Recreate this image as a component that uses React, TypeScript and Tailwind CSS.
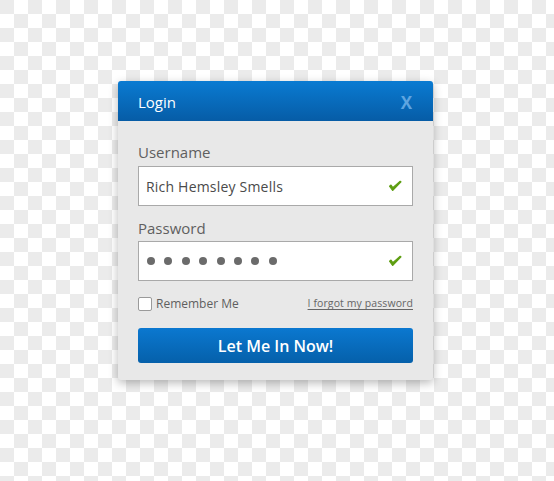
import React from "react";

function Check() {
  return (
    <svg width="14" height="12" viewBox="0 0 14 12">
      <path d="M1.5 6.2 L4.6 10.5 L13 1.8 L12.2 1.2 L4.8 7.6 L3 5 Z" fill="#5e9e12" stroke="#5e9e12" strokeWidth="1.1" strokeLinejoin="round" />
    </svg>
  );
}

export default function App() {
  return (
    <div
      className="w-[554px] h-[481px] overflow-hidden pt-[81px] pl-[118px] bg-white bg-[conic-gradient(#ebebeb_25%,#ffffff_0_50%,#ebebeb_0_75%,#ffffff_0)] bg-size-[28px_28px] bg-position-[14px_0px]"
      style={{ fontFamily: '"Open Sans", "Noto Sans", sans-serif' }}
    >
      <div className="w-[315px] h-[299px] rounded-[3px] bg-[#e8e8e8] shadow-[0_3px_10px_rgba(0,0,0,0.28)] overflow-hidden flex flex-col">
        <div className="h-[40px] flex items-center justify-between px-[20px] pt-[3px] bg-[linear-gradient(#0a7bd2,#065ca6)]">
          <span className="text-white text-[15px]">Login</span>
          <span className="text-[#5fa5e0] text-[17px] font-bold pr-[1px]">X</span>
        </div>
        <div className="flex flex-col px-[20px] pt-[21px]">
          <div className="text-[#5f5f5f] text-[15px] leading-[20px]">Username</div>
          <div className="mt-[4px] h-[40px] bg-white border border-[#a9a9a9] flex items-center justify-between pl-[7px] pr-[10px]">
            <span className="text-[#4a4a4a] text-[14px] tracking-[0.2px]">Rich Hemsley Smells</span>
            <Check />
          </div>
          <div className="mt-[12px] text-[#5f5f5f] text-[15px] leading-[20px]">Password</div>
          <div className="mt-[3px] h-[40px] bg-white border border-[#a9a9a9] flex items-center justify-between pl-[8px] pr-[10px]">
            <div className="flex gap-[9.4px]">
              {Array.from({ length: 8 }).map((_, i) => (
                <span key={i} className="w-[8px] h-[8px] rounded-full bg-[#6b6b6b]" />
              ))}
            </div>
            <Check />
          </div>
          <div className="mt-[15px] flex items-center justify-between h-[16px]">
            <div className="flex items-center gap-[4px]">
              <span className="w-[14px] h-[14px] bg-white border border-[#9a9a9a] rounded-[2px]" />
              <span className="text-[#5f5f5f] text-[12px]">Remember Me</span>
            </div>
            <span className="text-[#666] text-[10.5px] tracking-[0.1px] underline underline-offset-2">I forgot my password</span>
          </div>
          <div className="mt-[16px] h-[35px] rounded-[3px] bg-[linear-gradient(#0b78d0,#0560aa)] flex items-center justify-center">
            <span className="text-white text-[16px] font-semibold">Let Me In Now!</span>
          </div>
        </div>
      </div>
    </div>
  );
}
